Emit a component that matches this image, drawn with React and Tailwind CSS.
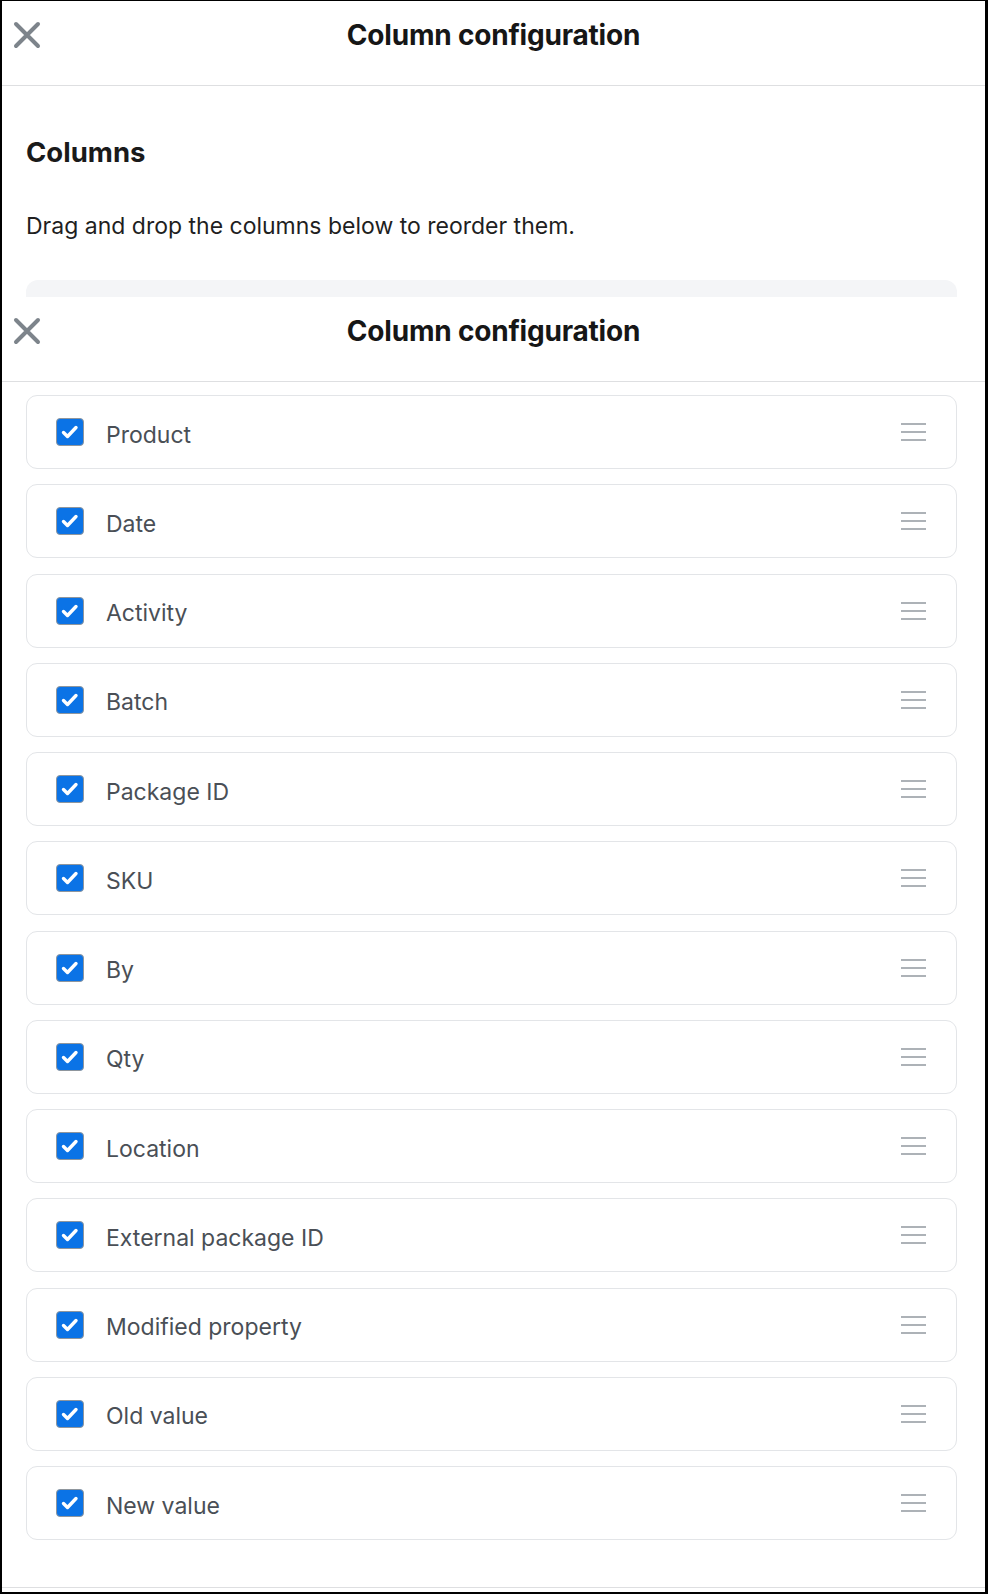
import React from 'react';

const COLUMNS = [
  'Product',
  'Date',
  'Activity',
  'Batch',
  'Package ID',
  'SKU',
  'By',
  'Qty',
  'Location',
  'External package ID',
  'Modified property',
  'Old value',
  'New value',
];

function CloseIcon() {
  return (
    <svg width="28" height="28" viewBox="0 0 28 28" fill="none">
      <path d="M3 3L25 25M25 3L3 25" stroke="#7d848b" strokeWidth="4" strokeLinecap="round" />
    </svg>
  );
}

function Header() {
  return (
    <div className="h-[85px] shrink-0 border-b border-[#dedfe1] pt-[10px] pl-[11px] pr-[11px]">
      <div className="grid h-[48px] grid-cols-[40px_1fr_40px] items-center">
        <button className="flex h-[28px] w-[28px] items-center justify-center">
          <CloseIcon />
        </button>
        <h2 className="text-center text-[28px] font-bold leading-none tracking-[-0.2px] text-[#161616]">
          Column configuration
        </h2>
        <div />
      </div>
    </div>
  );
}

function ColumnRow({ label }) {
  return (
    <div className="flex h-[74px] items-center rounded-[11px] border border-[#e3e5e8] bg-white pl-[29px] pr-[30px]">
      <span className="flex h-[28px] w-[28px] items-center justify-center rounded-[4px] border border-[#8f969d] bg-[#0b73e6]">
        <svg width="26" height="26" viewBox="0 0 26 26" fill="none">
          <path d="M6.5 13.5L10.5 17.5L19 8.5" stroke="white" strokeWidth="3.4" strokeLinecap="round" strokeLinejoin="round" />
        </svg>
      </span>
      <span className="ml-[22px] mt-[6px] flex-1 text-[23px] leading-none text-[#4a4f56]">{label}</span>
      <span className="flex w-[25px] flex-col gap-[6px]">
        <span className="h-[2px] bg-[#adb2b7]" />
        <span className="h-[2px] bg-[#adb2b7]" />
        <span className="h-[2px] bg-[#adb2b7]" />
      </span>
    </div>
  );
}

export default function App() {
  return (
    <div
      className="flex h-[1594px] w-[988px] flex-col overflow-hidden border-t-[1px] border-l-[2px] border-r-[3px] border-b-[2px] border-black bg-white"
      style={{ fontFamily: 'Inter, "Noto Sans", sans-serif' }}
    >
      <Header />

      <div className="h-[211px] shrink-0 pl-[24px] pr-[28px] pt-[51px]">
        <h3 className="text-[27.5px] font-bold leading-[30px] text-[#1a1a1a]">Columns</h3>
        <p className="mt-[44px] text-[23px] leading-[30px] text-[#1f1f1f]">
          Drag and drop the columns below to reorder them.
        </p>
        <div className="mt-[38.5px] h-[17.5px] rounded-t-[12px] bg-[#f4f5f7]" />
      </div>

      <Header />

      <div className="flex flex-col gap-[15.25px] pl-[24px] pr-[28px] pt-[13px] pb-[47px]">
        {COLUMNS.map((c) => (
          <ColumnRow key={c} label={c} />
        ))}
      </div>

      <div className="flex-1 border-t border-[#dedfe1]" />
    </div>
  );
}
